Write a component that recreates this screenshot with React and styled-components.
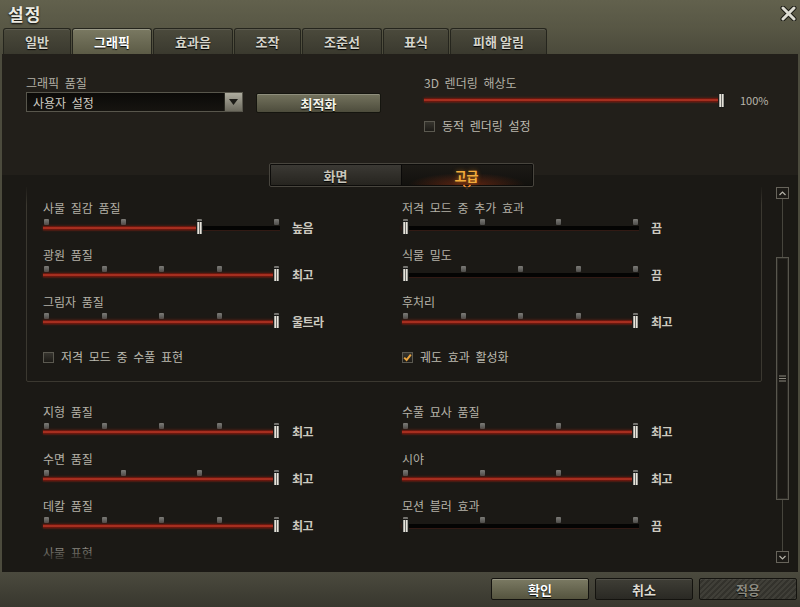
import React from 'react';
import styled, { createGlobalStyle, css } from 'styled-components';

const GlobalStyle = createGlobalStyle`
  html, body {
    margin: 0;
    padding: 0;
    background: #000;
  }
  body {
    font-family: "Noto Sans CJK KR", "Noto Sans", sans-serif;
  }
`;

const Window = styled.div`
  width: 800px;
  height: 607px;
  display: flex;
  flex-direction: column;
  overflow: hidden;
`;

const Header = styled.div`
  height: 54px;
  display: flex;
  flex-direction: column;
  background: linear-gradient(180deg, #62614d 0%, #575644 55%, #4b4a3b 100%);
`;

const TitleRow = styled.div`
  height: 27px;
  display: flex;
  align-items: center;
  justify-content: space-between;
  padding: 0 3px 0 8px;
`;

const Title = styled.div`
  font-size: 17px;
  font-weight: 700;
  line-height: 1;
  letter-spacing: 1px;
  color: #ecebe3;
  text-shadow: 0 1px 2px #000;
`;

const TabRow = styled.div`
  height: 27px;
  display: flex;
  align-items: flex-end;
  gap: 1px;
  padding-left: 3px;
`;

const Tab = styled.div`
  width: ${(p) => p.$w}px;
  height: 26px;
  box-sizing: border-box;
  border: 1px solid #25251d;
  border-bottom: none;
  border-radius: 3px 3px 0 0;
  display: flex;
  align-items: center;
  justify-content: center;
  font-size: 13px;
  font-weight: 700;
  color: #d6d5cc;
  text-shadow: 0 1px 1px #000;
  background: linear-gradient(180deg, #4b4a3c 0%, #3a392e 100%);
  box-shadow: inset 0 1px 0 rgba(255, 255, 255, 0.1);
  ${(p) =>
    p.$active &&
    css`
      color: #fff;
      background: linear-gradient(180deg, #7a7962 0%, #5c5b46 100%);
      box-shadow: inset 0 1px 0 rgba(255, 255, 255, 0.25);
    `}
`;

const Body = styled.div`
  flex: 1;
  min-height: 0;
  display: flex;
  flex-direction: column;
  background: #1b1915;
  border-left: 2px solid #4c4b3d;
  border-right: 2px solid #4c4b3d;
`;

const TopSection = styled.div`
  height: 109px;
  box-sizing: border-box;
  padding: 22px 0 0 24px;
  background: #221f1a;
  display: grid;
  grid-template-columns: 398px 1fr;
  align-items: start;
`;

const FieldLabel = styled.div`
  font-size: 12px;
  line-height: 14px;
  height: 14px;
  color: ${(p) => (p.$muted ? '#6d6a62' : '#b4b1a7')};
  word-spacing: 3px;
  white-space: nowrap;
`;

const SelectRow = styled.div`
  margin-top: 2px;
  display: flex;
  align-items: flex-start;
  gap: 13px;
`;

const Select = styled.div`
  width: 217px;
  height: 20px;
  box-sizing: border-box;
  border: 1px solid #58564c;
  background: linear-gradient(180deg, #0b0a08, #161410);
  display: flex;
  align-items: center;
  justify-content: space-between;
  padding-left: 6px;
  font-size: 12px;
  color: #cfccc2;
  word-spacing: 3px;
`;

const SelectArrow = styled.div`
  width: 17px;
  height: 18px;
  display: flex;
  align-items: center;
  justify-content: center;
  border-left: 1px solid #2a2a22;
  background: linear-gradient(180deg, #aeac9f, #6c6a5e);
`;

const OptimizeButton = styled.button`
  margin-top: 1px;
  width: 125px;
  height: 20px;
  padding: 0;
  border: 1px solid #15150f;
  border-radius: 2px;
  background: linear-gradient(180deg, #74735e, #4d4c3c);
  box-shadow: inset 0 1px 0 rgba(255, 255, 255, 0.2);
  font-family: inherit;
  font-size: 13px;
  font-weight: 700;
  color: #f4f3ea;
  text-shadow: 0 1px 1px #000;
`;

const SliderField = styled.div`
  height: 47px;
  display: flex;
  flex-direction: column;
`;

const SliderLine = styled.div`
  display: flex;
  align-items: flex-start;
  margin-top: ${(p) => p.$mt || 0}px;
`;

const SliderBox = styled.div`
  position: relative;
  width: ${(p) => p.$w}px;
  height: ${(p) => (p.$compact ? 15 : 22)}px;
  display: flex;
  flex-direction: column;
`;

const TickRow = styled.div`
  margin-top: 4px;
  height: 6px;
  display: flex;
  justify-content: space-between;
  padding: 0 1px;
`;

const Tick = styled.div`
  width: 5px;
  height: 6px;
  border-radius: 1px;
  background: linear-gradient(180deg, #7c7b77, #4d4c49);
`;

const Track = styled.div`
  margin-top: ${(p) => (p.$compact ? 5 : 1)}px;
  height: 4px;
  background: #040403;
  box-shadow: 0 1px 0 rgba(120, 30, 20, 0.25);
`;

const Fill = styled.div`
  height: 100%;
  background: linear-gradient(180deg, #4a0c06 0%, #c43a28 50%, #4a0c06 100%);
  box-shadow: 0 0 3px rgba(190, 40, 20, 0.45);
`;

const Thumb = styled.div`
  position: absolute;
  top: ${(p) => (p.$compact ? 0 : 6)}px;
  width: 7px;
  height: ${(p) => (p.$compact ? 15 : 14)}px;
  box-sizing: border-box;
  border: 1px solid #1a1a18;
  border-radius: 1px;
  background: linear-gradient(90deg, #8a8984 0%, #e6e3da 30%, #6d6c68 50%, #e6e3da 70%, #7c7b76 100%);
`;

const Value = styled.div`
  margin-left: ${(p) => p.$ml || 12}px;
  margin-top: ${(p) => (p.$compact ? 0 : 6)}px;
  font-size: ${(p) => (p.$compact ? 11 : 12)}px;
  font-weight: ${(p) => (p.$compact ? 400 : 600)};
  line-height: 14px;
  letter-spacing: ${(p) => (p.$compact ? 0 : -0.5)}px;
  color: ${(p) => (p.$compact ? '#b8b5ab' : '#cdcac0')};
  white-space: nowrap;
`;

const CheckRow = styled.label`
  display: flex;
  align-items: center;
  gap: 7px;
  margin-top: ${(p) => p.$mt || 0}px;
  font-size: 12px;
  line-height: 12px;
  color: #bcb9af;
  word-spacing: 3px;
  white-space: nowrap;
`;

const CheckBox = styled.span`
  width: 11px;
  height: 11px;
  box-sizing: border-box;
  border: 1px solid #5b5950;
  background: linear-gradient(180deg, #36342e, #1d1b17);
  display: flex;
  align-items: center;
  justify-content: center;
`;

const SubTabRow = styled.div`
  height: 24px;
  display: flex;
  justify-content: center;
  padding-left: 2px;
  background: linear-gradient(180deg, #221f1a 0 12px, #1b1915 12px 100%);
`;

const SubTabs = styled.div`
  display: flex;
  padding: 1px;
  border: 1px solid #48453e;
  border-radius: 2px;
  background: #0d0c0a;
`;

const SubTab = styled.div`
  position: relative;
  width: 130px;
  height: 20px;
  display: flex;
  align-items: center;
  justify-content: center;
  font-size: 13px;
  font-weight: 700;
  color: #c9c6bc;
  text-shadow: 0 1px 1px #000;
  background: linear-gradient(180deg, #3b3934, #26241f);
  & + & {
    border-left: 1px solid #0a0908;
  }
  ${(p) =>
    p.$active &&
    css`
      color: #f4ad3c;
      text-shadow: 0 0 4px rgba(240, 140, 30, 0.6);
      background: radial-gradient(ellipse 45% 60% at 50% 100%, rgba(190, 60, 20, 0.45), transparent 100%),
        linear-gradient(180deg, #1c1a16, #12110e);
    `}
`;

const Chevron = styled.svg`
  position: absolute;
  left: 50%;
  bottom: -5px;
  transform: translateX(-50%);
`;

const ScrollArea = styled.div`
  flex: 1;
  min-height: 0;
  display: flex;
`;

const ScrollContent = styled.div`
  position: relative;
  flex: 1;
  overflow: hidden;
  padding: 0 14px 0 24px;
`;

const ScrollInner = styled.div`
  margin-top: -40px;
`;

const Fade = styled.div`
  position: absolute;
  left: 0;
  right: 0;
  pointer-events: none;
  ${(p) =>
    p.$top
      ? css`
          top: 0;
          height: 18px;
          background: linear-gradient(180deg, rgba(27, 25, 21, 0.9), rgba(27, 25, 21, 0));
        `
      : css`
          bottom: 0;
          height: 30px;
          background: linear-gradient(180deg, rgba(27, 25, 21, 0), rgba(27, 25, 21, 0.7) 50%, rgba(27, 25, 21, 0.92));
        `}
`;

const Panel = styled.div`
  border: 1px solid #3b3830;
  border-radius: 2px;
  padding: 53px 0 18px 16px;
`;

const Group = styled.div`
  margin-top: 23px;
  padding-left: 17px;
`;

const SettingsGrid = styled.div`
  display: grid;
  grid-template-columns: 359px 1fr;
`;

const ScrollBar = styled.div`
  width: 13px;
  margin-right: 9px;
  padding-bottom: 9px;
  display: flex;
  flex-direction: column;
`;

const ScrollButton = styled.div`
  height: 12px;
  box-sizing: border-box;
  border: 1px solid #67645b;
  background: #1c1a16;
  display: flex;
  align-items: center;
  justify-content: center;
`;

const ScrollTrack = styled.div`
  flex: 1;
  background: linear-gradient(90deg, transparent 6px, #47453d 6px 7px, transparent 7px);
`;

const ScrollThumb = styled.div`
  margin-top: 58px;
  height: 243px;
  box-sizing: border-box;
  border: 1px solid #58564d;
  box-shadow: inset 0 0 0 1px #2b2924;
  background: #1a1814;
  display: flex;
  align-items: center;
  justify-content: center;
`;

const BottomBar = styled.div`
  height: 35px;
  box-sizing: border-box;
  display: flex;
  justify-content: flex-end;
  align-items: flex-start;
  gap: 6px;
  padding: 6px 3px 0 0;
  background: linear-gradient(180deg, #4b4a3e, #38372e);
`;

const ActionButton = styled.button`
  width: 98px;
  height: 22px;
  padding: 0;
  border: 1px solid #14130f;
  border-radius: 2px;
  font-family: inherit;
  font-size: 13px;
  font-weight: 700;
  text-shadow: 0 1px 1px #000;
  ${(p) =>
    p.$variant === 'primary' &&
    css`
      color: #fff;
      background: linear-gradient(180deg, #7b7a63, #55543f);
      box-shadow: inset 0 1px 0 rgba(255, 255, 255, 0.22);
    `}
  ${(p) =>
    p.$variant === 'default' &&
    css`
      color: #dedbd2;
      background: linear-gradient(180deg, #3f3e36, #2a2924);
      box-shadow: inset 0 1px 0 rgba(255, 255, 255, 0.1);
    `}
  ${(p) =>
    p.$variant === 'disabled' &&
    css`
      color: #8b8a80;
      background: repeating-linear-gradient(135deg, #403f38 0 2px, #33322c 2px 4px);
      box-shadow: inset 0 1px 0 rgba(255, 255, 255, 0.06);
    `}
`;

const tabs = [
  { label: '일반', w: 68 },
  { label: '그래픽', w: 80, active: true },
  { label: '효과음', w: 80 },
  { label: '조작', w: 67 },
  { label: '조준선', w: 80 },
  { label: '표식', w: 66 },
  { label: '피해 알림', w: 97 },
];

const advancedRows = [
  [
    { label: '사물 질감 품질', ticks: 4, value: 2 / 3, text: '높음' },
    { label: '저격 모드 중 추가 효과', ticks: 4, value: 0, text: '끔' },
  ],
  [
    { label: '광원 품질', ticks: 5, value: 1, text: '최고' },
    { label: '식물 밀도', ticks: 5, value: 0, text: '끔' },
  ],
  [
    { label: '그림자 품질', ticks: 5, value: 1, text: '울트라' },
    { label: '후처리', ticks: 5, value: 1, text: '최고' },
  ],
];

const moreRows = [
  [
    { label: '지형 품질', ticks: 5, value: 1, text: '최고' },
    { label: '수풀 묘사 품질', ticks: 4, value: 1, text: '최고' },
  ],
  [
    { label: '수면 품질', ticks: 4, value: 1, text: '최고' },
    { label: '시야', ticks: 4, value: 1, text: '최고' },
  ],
  [
    { label: '데칼 품질', ticks: 5, value: 1, text: '최고' },
    { label: '모션 블러 효과', ticks: 4, value: 0, text: '끔' },
  ],
];

const Slider = ({ width, ticks, value, compact }) => (
  <SliderBox $w={width} $compact={compact}>
    {ticks && (
      <TickRow>
        {[...Array(ticks).keys()].map((i) => (
          <Tick key={i} />
        ))}
      </TickRow>
    )}
    <Track $compact={compact}>
      <Fill style={{ width: `calc(${value} * (100% - 7px) + 3.5px)` }} />
    </Track>
    <Thumb $compact={compact} style={{ left: `calc(${value} * (100% - 7px))` }} />
  </SliderBox>
);

const SliderSetting = ({ label, ticks, value, text }) => (
  <SliderField>
    <FieldLabel>{label}</FieldLabel>
    <SliderLine>
      <Slider width={237} ticks={ticks} value={value} />
      <Value>{text}</Value>
    </SliderLine>
  </SliderField>
);

const Check = ({ checked, label, mt }) => (
  <CheckRow $mt={mt}>
    <CheckBox>
      {checked && (
        <svg width="9" height="9" viewBox="0 0 9 9">
          <path d="M1.2 4.6 L3.6 7 L7.8 1.6" fill="none" stroke="#e9a43e" strokeWidth="2" />
        </svg>
      )}
    </CheckBox>
    {label}
  </CheckRow>
);

const SettingsRows = ({ rows }) =>
  rows.map((pair) =>
    pair.map((item) => <SliderSetting key={item.label} {...item} />)
  );

const App = () => (
  <>
    <GlobalStyle />
    <Window>
      <Header>
        <TitleRow>
          <Title>설정</Title>
          <svg width="17" height="15" viewBox="0 0 17 15">
            <path d="M3 2 L14 13 M14 2 L3 13" stroke="#1a1a14" strokeWidth="5" strokeLinecap="round" />
            <path d="M3 2 L14 13 M14 2 L3 13" stroke="#dcdbd2" strokeWidth="3" strokeLinecap="round" />
          </svg>
        </TitleRow>
        <TabRow>
          {tabs.map((t) => (
            <Tab key={t.label} $w={t.w} $active={t.active}>
              {t.label}
            </Tab>
          ))}
        </TabRow>
      </Header>

      <Body>
        <TopSection>
          <div>
            <FieldLabel>그래픽 품질</FieldLabel>
            <SelectRow>
              <Select>
                사용자 설정
                <SelectArrow>
                  <svg width="9" height="6" viewBox="0 0 9 6">
                    <path d="M0 0 H9 L4.5 6 Z" fill="#1c1b17" />
                  </svg>
                </SelectArrow>
              </Select>
              <OptimizeButton>최적화</OptimizeButton>
            </SelectRow>
          </div>
          <div>
            <FieldLabel>3D 렌더링 해상도</FieldLabel>
            <SliderLine $mt={3}>
              <Slider width={301} value={1} compact />
              <Value $compact $ml={15}>100%</Value>
            </SliderLine>
            <Check mt={12} label="동적 렌더링 설정" />
          </div>
        </TopSection>

        <SubTabRow>
          <SubTabs>
            <SubTab>화면</SubTab>
            <SubTab $active>
              고급
              <Chevron width="9" height="6" viewBox="0 0 9 6">
                <path d="M1 1 L4.5 4.5 L8 1" fill="none" stroke="#f08a2c" strokeWidth="1.6" />
              </Chevron>
            </SubTab>
          </SubTabs>
        </SubTabRow>

        <ScrollArea>
          <ScrollContent>
            <ScrollInner>
              <Panel>
                <SettingsGrid>
                  <SettingsRows rows={advancedRows} />
                  <Check mt={9} label="저격 모드 중 수풀 표현" />
                  <Check mt={9} checked label="궤도 효과 활성화" />
                </SettingsGrid>
              </Panel>
              <Group>
                <SettingsGrid>
                  <SettingsRows rows={moreRows} />
                  <FieldLabel>사물 표현</FieldLabel>
                </SettingsGrid>
              </Group>
            </ScrollInner>
            <Fade $top />
            <Fade />
          </ScrollContent>
          <ScrollBar>
            <ScrollButton>
              <svg width="7" height="5" viewBox="0 0 7 5">
                <path d="M0.5 4 L3.5 1 L6.5 4" fill="none" stroke="#b5b2a8" strokeWidth="1.2" />
              </svg>
            </ScrollButton>
            <ScrollTrack>
              <ScrollThumb>
                <svg width="7" height="7" viewBox="0 0 7 7">
                  <path d="M0 1 H7 M0 3.5 H7 M0 6 H7" stroke="#8c897f" strokeWidth="1" />
                </svg>
              </ScrollThumb>
            </ScrollTrack>
            <ScrollButton>
              <svg width="7" height="5" viewBox="0 0 7 5">
                <path d="M0.5 1 L3.5 4 L6.5 1" fill="none" stroke="#b5b2a8" strokeWidth="1.2" />
              </svg>
            </ScrollButton>
          </ScrollBar>
        </ScrollArea>
      </Body>

      <BottomBar>
        <ActionButton $variant="primary">확인</ActionButton>
        <ActionButton $variant="default">취소</ActionButton>
        <ActionButton $variant="disabled">적용</ActionButton>
      </BottomBar>
    </Window>
  </>
);

export default App;
